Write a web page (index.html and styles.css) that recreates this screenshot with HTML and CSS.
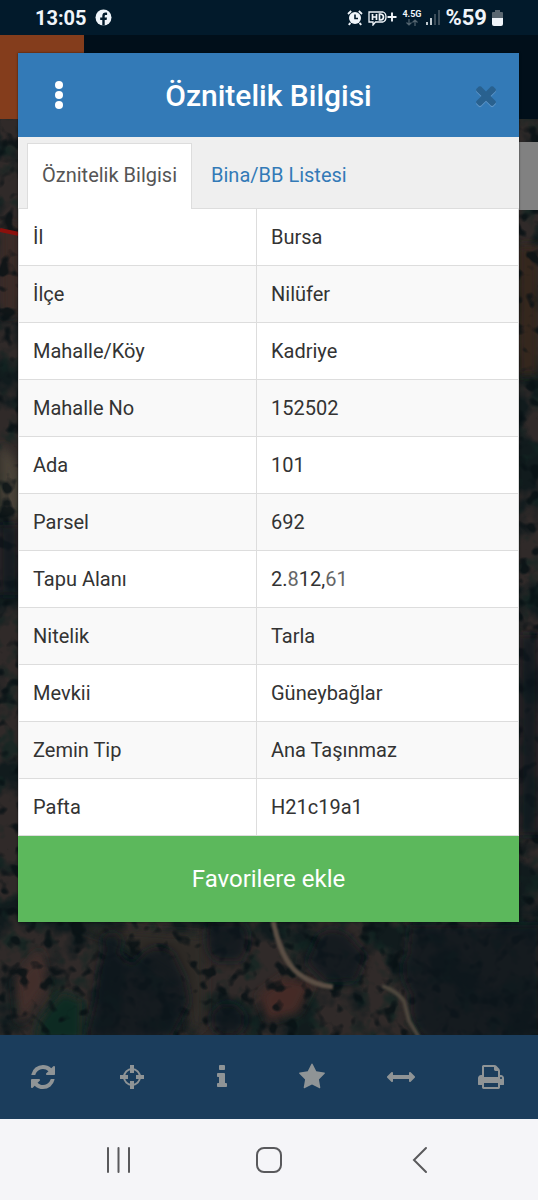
FILE: index.html
```
<!DOCTYPE html>
<html lang="tr">
<head>
    <meta charset="UTF-8">
    <meta name="viewport" content="width=device-width, initial-scale=1.0">
    <title>Öznitelik Bilgisi</title>
    <link rel="stylesheet" href="styles.css">
</head>
<body>

<!-- Status bar -->
<header class="status">
    <div class="status-group">
        <span>13:05</span>
        <svg width="17" height="17" viewBox="0 0 17 17">
            <circle cx="8.5" cy="8.5" r="8" fill="#f0f5fa"/>
            <path d="M7.3 16.5v-5.4H5.2V8.6h2.1V7c0-2.3 1.3-3.4 3.2-3.4.7 0 1.3.1 1.6.2V6h-1.1c-1 0-1.3.5-1.3 1.3v1.3h2.3l-.4 2.5H9.7v5.4z" fill="#021a2b"/>
        </svg>
    </div>
    <div class="status-group right">
        <svg width="16" height="17" viewBox="0 0 16 17">
            <circle cx="8" cy="9" r="6" fill="#f0f5fa"/>
            <path d="M1 5l3.2-3M15 5l-3.2-3M3.5 14l-1.8 1.8M12.5 14l1.8 1.8" stroke="#f0f5fa" stroke-width="1.8"/>
            <path d="M8 5.5V9.5h3" fill="none" stroke="#021a2b" stroke-width="1.6"/>
        </svg>
        <svg width="29" height="16" viewBox="0 0 29 16">
            <path d="M3 12H1V2h14q3 1 3 5t-3 5H7.5L5 15v-3z" fill="none" stroke="#f0f5fa" stroke-width="1.3"/>
            <path d="M4.5 4v6M8.5 4v6M4.5 7h4M11.5 4v6h1q3-.3 3-3t-3-3z" fill="none" stroke="#f0f5fa" stroke-width="1.7"/>
            <path d="M19.5 7h9M24 2.5v9" stroke="#f0f5fa" stroke-width="1.9"/>
        </svg>
        <div class="net">
            <span>4.5G</span>
            <svg width="12" height="7" viewBox="0 0 12 7">
                <path d="M3 0v6M.5 3.5L3 6l2.5-2.5M9 7V1M6.5 3.5L9 1l2.5 2.5" fill="none" stroke="#53646f" stroke-width="1.2"/>
            </svg>
        </div>
        <svg width="14" height="15" viewBox="0 0 14 15">
            <path d="M1 12v3M5 8v7" stroke="#f0f5fa" stroke-width="1.6"/>
            <path d="M9 4v11M13 0v15" stroke="#4b5a66" stroke-width="1.6"/>
        </svg>
        <span class="percent">%59</span>
        <svg width="11" height="16" viewBox="0 0 11 16">
            <path d="M3 0h5v2h2q1 0 1 1v5H0V3q0-1 1-1h2z" fill="#5a6771"/>
            <path d="M0 8h11v6q0 2-2 2H2q-2 0-2-2z" fill="#f0f5fa"/>
        </svg>
    </div>
</header>

<main class="stage">

    <!-- Satellite map under the dialog -->
    <svg class="map" viewBox="0 0 538 1000" preserveAspectRatio="xMidYMin slice" aria-hidden="true">
        <defs>
            <filter id="forest" x="0" y="0" width="100%" height="100%" color-interpolation-filters="sRGB">
                <feTurbulence type="fractalNoise" baseFrequency="0.022" numOctaves="4" seed="12"/>
                <feColorMatrix values="0 0 0 0 0.065  0 0 0 0 0.105  0 0 0 0 0.115  5 0 0 0 -2.3"/>
            </filter>
            <filter id="leaves" x="0" y="0" width="100%" height="100%" color-interpolation-filters="sRGB">
                <feTurbulence type="fractalNoise" baseFrequency="0.05" numOctaves="3" seed="5"/>
                <feColorMatrix values="0 0 0 0 0.070  0 0 0 0 0.150  0 0 0 0 0.135  0 4 0 0 -2"/>
            </filter>
            <filter id="dots" x="0" y="0" width="100%" height="100%" color-interpolation-filters="sRGB">
                <feTurbulence type="fractalNoise" baseFrequency="0.07" numOctaves="2" seed="31"/>
                <feColorMatrix values="0 0 0 0 0.030  0 0 0 0 0.065  0 0 0 0 0.080  0 0 6 0 -3.3"/>
            </filter>
            <filter id="soft"><feGaussianBlur stdDeviation="5"/></filter>
            <filter id="edge"><feGaussianBlur stdDeviation="1"/></filter>
        </defs>
        <rect width="538" height="1000" fill="#302a29"/>
        <rect width="538" height="1000" filter="url(#forest)"/>
        <rect width="538" height="1000" filter="url(#leaves)" opacity=".7"/>
        <g filter="url(#soft)">
            <path d="M0 190h20v90H0z" fill="#3a2b27"/>
            <path d="M0 410q16 10 20 30v40H0z" fill="#4a4238"/>
            <path d="M518 210h20v130h-20z" fill="#35251f"/>
            <path d="M15 945l25-30 8 35-28 40z" fill="#432d2a"/>
            <path d="M258 960l25-18 30 6-15 30-30 8z" fill="#452c28"/>
            <path d="M70 890l60 5 75 5v90l-15 10-5-50-60-40z" fill="#2f2a28"/>
            <path d="M40 985l22-28 20 8v40H35z" fill="#0e2a20"/>
        </g>
        <rect width="538" height="1000" filter="url(#dots)" opacity=".8"/>
        <g fill="#0a131b" opacity=".75" filter="url(#soft)">
            <path d="M95 965q3-40 13-60 10 15 25 25 18-28 40-13l12 25 5 25-20 38H85z"/>
            <path d="M410 890h130v115H425q-18-20-14-45-14-25-4-40z"/>
            <path d="M208 888h35q12 15-2 38h-25q-14-10-8-38z"/>
            <path d="M318 900q14-12 30 0l18 20-10 26-30 2-20-20z"/>
            <circle cx="112" cy="907" r="10"/>
            <circle cx="228" cy="985" r="17"/>
            <path d="M520 600h18v200h-18zM0 490h18v70H0z"/>
        </g>
        <g fill="none" filter="url(#edge)">
            <path d="M272 880q8 45 27 59 14 11 34 13" stroke="#5c5045" stroke-width="5"/>
            <path d="M382 951q14 4 22 15l5 20 11 18" stroke="#4e463e" stroke-width="4"/>
        </g>
        <path d="M0 195l19 4" stroke="#8c100c" stroke-width="4"/>
        <rect width="538" height="84" fill="#010f1a"/>
        <rect width="84" height="84" fill="#843d1c"/>
        <rect x="500" y="107" width="38" height="68" fill="#818181"/>
    </svg>

    <!-- Attribute dialog -->
    <section class="dialog">
        <div class="dialog-header">
            <button class="menu" aria-label="Menü">
                <svg width="10" height="28" viewBox="0 0 10 28" fill="#fff">
                    <circle cx="5" cy="4" r="4"/><circle cx="5" cy="14" r="4"/><circle cx="5" cy="24" r="4"/>
                </svg>
            </button>
            <h1>Öznitelik Bilgisi</h1>
            <button class="close" aria-label="Kapat">
                <svg width="30" height="30" viewBox="0 0 1792 1792">
                    <path transform="translate(0 70)" fill="#5f96c8" d="M1490 1322q0 40-28 68l-136 136q-28 28-68 28t-68-28l-294-294-294 294q-28 28-68 28t-68-28l-136-136q-28-28-28-68t28-68l294-294-294-294q-28-28-28-68t28-68l136-136q28-28 68-28t68 28l294 294 294-294q28-28 68-28t68 28l136 136q28 28 28 68t-28 68l-294 294 294 294q28 28 28 68z"/>
                    <path fill="#29618f" d="M1490 1322q0 40-28 68l-136 136q-28 28-68 28t-68-28l-294-294-294 294q-28 28-68 28t-68-28l-136-136q-28-28-28-68t28-68l294-294-294-294q-28-28-28-68t28-68l136-136q28-28 68-28t68 28l294 294 294-294q28-28 68-28t68 28l136 136q28 28 28 68t-28 68l-294 294 294 294q28 28 28 68z"/>
                </svg>
            </button>
        </div>

        <nav class="tabs">
            <a class="tab active" href="#oznitelik">Öznitelik Bilgisi</a>
            <a class="tab" href="#bina">Bina/BB Listesi</a>
        </nav>

        <table id="oznitelik">
            <tbody>
                <tr><th scope="row">İl</th><td>Bursa</td></tr>
                <tr><th scope="row">İlçe</th><td>Nilüfer</td></tr>
                <tr><th scope="row">Mahalle/Köy</th><td>Kadriye</td></tr>
                <tr><th scope="row">Mahalle No</th><td>152502</td></tr>
                <tr><th scope="row">Ada</th><td>101</td></tr>
                <tr><th scope="row">Parsel</th><td>692</td></tr>
                <tr><th scope="row">Tapu Alanı</th><td>2.<span class="faded">8</span>12,<span class="faded">61</span></td></tr>
                <tr><th scope="row">Nitelik</th><td>Tarla</td></tr>
                <tr><th scope="row">Mevkii</th><td>Güneybağlar</td></tr>
                <tr><th scope="row">Zemin Tip</th><td>Ana Taşınmaz</td></tr>
                <tr><th scope="row">Pafta</th><td>H21c19a1</td></tr>
            </tbody>
        </table>

        <button class="favorite">Favorilere ekle</button>
    </section>
</main>

<!-- Map tools -->
<nav class="toolbar">
    <button aria-label="Yenile">
        <svg viewBox="0 0 1792 1792"><path d="M1639 1056q0 5-1 7-64 268-268 434.5t-478 166.5q-146 0-282.5-55t-243.5-157l-129 129q-19 19-45 19t-45-19-19-45v-448q0-26 19-45t45-19h448q26 0 45 19t19 45-19 45l-137 137q71 66 161 102t187 36q134 0 250-65t186-179q11-17 53-117 8-23 30-23h192q13 0 22.5 9.5t9.5 22.5zm25-800v448q0 26-19 45t-45 19h-448q-26 0-45-19t-19-45 19-45l138-138q-148-137-349-137-134 0-250 65t-186 179q-11 17-53 117-8 23-30 23h-199q-13 0-22.5-9.5t-9.5-22.5v-7q65-268 270-434.5t480-166.5q146 0 284 55.5t245 156.5l130-129q19-19 45-19t45 19 19 45z"/></svg>
    </button>
    <button aria-label="Konum">
        <svg viewBox="0 0 28 28">
            <circle cx="14" cy="14" r="8" fill="none" stroke="#8f9496" stroke-width="2"/>
            <path d="M14 2v8M14 18v8M2 14h8M18 14h8" stroke="#8f9496" stroke-width="4"/>
        </svg>
    </button>
    <button aria-label="Bilgi">
        <svg viewBox="0 0 1792 1792"><path d="M1216 1344v128q0 26-19 45t-45 19h-512q-26 0-45-19t-19-45v-128q0-26 19-45t45-19h64v-384h-64q-26 0-45-19t-19-45v-128q0-26 19-45t45-19h384q26 0 45 19t19 45v576h64q26 0 45 19t19 45zm-128-1152v192q0 26-19 45t-45 19h-256q-26 0-45-19t-19-45v-192q0-26 19-45t45-19h256q26 0 45 19t19 45z"/></svg>
    </button>
    <button aria-label="Favoriler">
        <svg viewBox="0 0 1792 1792"><path d="M1728 647q0 22-26 48l-363 354 86 500q1 7 1 20 0 21-10.5 35.5t-30.5 14.5q-19 0-40-12l-449-236-449 236q-22 12-40 12-21 0-31.5-14.5t-10.5-35.5q0-6 2-20l86-500-364-354q-25-27-25-48 0-37 56-46l502-73 225-455q19-41 49-41t49 41l225 455 502 73q56 9 56 46z"/></svg>
    </button>
    <button aria-label="Ölçüm">
        <svg viewBox="0 0 1792 1792"><path d="M1792 896q0 26-19 45l-256 256q-19 19-45 19t-45-19-19-45v-128h-1024v128q0 26-19 45t-45 19-45-19l-256-256q-19-19-19-45t19-45l256-256q19-19 45-19t45 19 19 45v128h1024v-128q0-26 19-45t45-19 45 19l256 256q19 19 19 45z"/></svg>
    </button>
    <button aria-label="Yazdır">
        <svg viewBox="0 0 1792 1792"><path d="M448 1536h896v-256h-896v256zm0-640h896v-384h-160q-40 0-68-28t-28-68v-160h-640v640zm1152 64q0-26-19-45t-45-19-45 19-19 45 19 45 45 19 45-19 19-45zm128 0v416q0 13-9.5 22.5t-22.5 9.5h-224v160q0 40-28 68t-68 28h-960q-40 0-68-28t-28-68v-160h-224q-13 0-22.5-9.5t-9.5-22.5v-416q0-79 56.5-135.5t135.5-56.5h64v-544q0-40 28-68t68-28h672q40 0 88 20t76 48l152 152q28 28 48 76t20 88v256h64q79 0 135.5 56.5t56.5 135.5z"/></svg>
    </button>
</nav>

<!-- System navigation -->
<nav class="system">
    <button aria-label="Son uygulamalar">
        <svg width="28" height="28" viewBox="0 0 28 28"><path d="M4 2v24M14.5 2v24M25 2v24"/></svg>
    </button>
    <button aria-label="Ana ekran">
        <svg width="28" height="28" viewBox="0 0 28 28"><rect x="2" y="2" width="24" height="24" rx="7"/></svg>
    </button>
    <button aria-label="Geri">
        <svg width="28" height="28" viewBox="0 0 28 28"><path d="M20 2L8 14l12 12"/></svg>
    </button>
</nav>

</body>
</html>
```
FILE: styles.css
```
* {
    box-sizing: border-box;
}
body {
    margin: 0;
    min-height: 100vh;
    display: flex;
    flex-direction: column;
    font-family: Roboto, "Noto Sans", sans-serif;
    color: #333;
    background: #010f1a;
}
button {
    border: 0;
    padding: 0;
    background: none;
    font-family: inherit;
}
svg {
    display: block;
}

/* status bar */
.status {
    display: flex;
    justify-content: space-between;
    align-items: center;
    height: 35px;
    padding: 0 35px;
    background: #021a2b;
    color: #f0f5fa;
    font-size: 20px;
    font-weight: 700;
}
.status-group {
    display: flex;
    align-items: center;
    gap: 8px;
}
.right {
    gap: 5px;
}
.percent {
    font-size: 22px;
}
.net {
    display: flex;
    flex-direction: column;
    align-items: center;
    font-size: 9px;
    line-height: 10px;
}

/* map and dialog */
.stage {
    position: relative;
    flex: 1;
    padding: 18px 19px 112px 18px;
}
.map {
    position: absolute;
    top: 0;
    left: 0;
    width: 100%;
    height: 100%;
}
.dialog {
    position: relative;
    background: #fff;
    box-shadow: 0 0 2px rgba(0, 0, 0, 0.6);
}
.dialog-header {
    display: flex;
    align-items: center;
    height: 84px;
    padding: 0 18px;
    background: #337ab7;
}
.dialog-header h1 {
    flex: 1;
    margin: 0;
    color: #fff;
    font-size: 30px;
    font-weight: 500;
    text-align: center;
}
.menu, .close {
    display: flex;
    justify-content: center;
    width: 46px;
}
.close {
    justify-content: flex-end;
}
.tabs {
    display: flex;
    gap: 4px;
    height: 72px;
    padding: 6px 9px 0;
    background: #efefef;
    border-bottom: 1px solid #ddd;
}
.tab {
    padding: 0 14px;
    border: 1px solid transparent;
    border-bottom: 0;
    color: #337ab7;
    font-size: 20px;
    line-height: 62px;
    text-decoration: none;
}
.tab.active {
    margin-bottom: -1px;
    background: #fff;
    border-color: #ddd;
    color: #555;
}
table {
    width: 100%;
    border-collapse: collapse;
    table-layout: fixed;
}
tr:nth-child(even) {
    background: #f9f9f9;
}
th, td {
    padding: 14px;
    border: 1px solid #ddd;
    font-size: 20px;
    font-weight: 400;
    line-height: 28px;
    text-align: left;
}
th {
    width: 238px;
}
tr:first-child th, tr:first-child td {
    border-top: 0;
}
.faded {
    color: #666;
}
.favorite {
    display: block;
    width: 100%;
    height: 86px;
    background: #5cb85c;
    color: #fff;
    font-size: 24px;
}

/* bottom bars */
.toolbar {
    display: grid;
    grid-template-columns: repeat(6, 1fr);
    height: 84px;
    background: #1b3d5c;
}
.toolbar button {
    display: flex;
    align-items: center;
    justify-content: center;
    padding-right: 4px;
}
.toolbar svg {
    width: 28px;
    height: 28px;
    fill: #8f9496;
}
.system {
    display: grid;
    grid-template-columns: repeat(3, 1fr);
    height: 81px;
    padding: 0 43px;
    background: #f5f5f8;
}
.system button {
    display: flex;
    align-items: center;
    justify-content: center;
}
.system svg {
    fill: none;
    stroke: #59595c;
    stroke-width: 2;
    stroke-linecap: round;
}
```
